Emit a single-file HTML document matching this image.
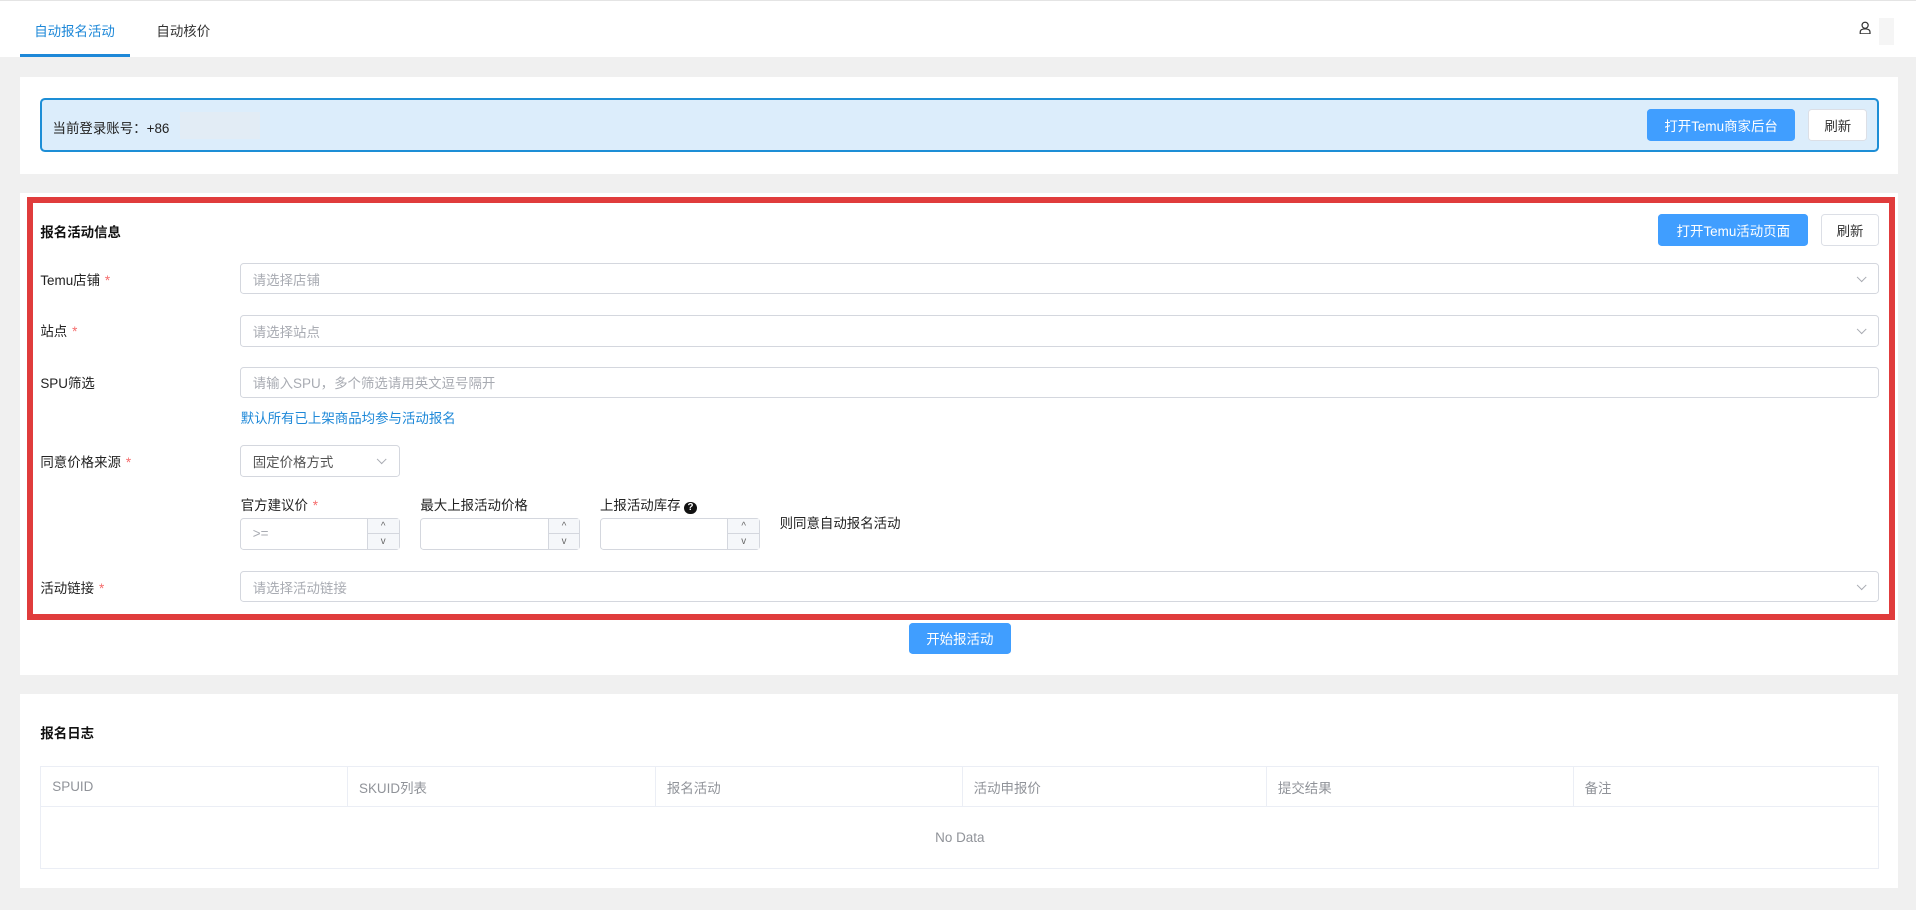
<!DOCTYPE html>
<html><head><meta charset="utf-8"><style>
html{zoom:1.22194}
*{box-sizing:border-box;margin:0;padding:0}
body{width:1568px;height:745px;overflow:hidden;background:#f0f0f0;font-family:"Liberation Sans","Noto Sans CJK SC",sans-serif;font-size:11px;color:#222;position:relative}
.a{position:absolute}
.hdr{left:0;top:0;width:1568px;height:47px;background:#fff;border-top:1px solid #e4e4e4}
.card{background:#fff;left:16px;width:1537px}
.btnp{background:#409eff;color:#fff;border-radius:3px;display:flex;align-items:center;justify-content:center;font-size:11px}
.btn{background:#fff;border:1px solid #dcdfe6;color:#333;border-radius:3px;display:flex;align-items:center;justify-content:center;font-size:11px}
.inp{border:1px solid #d4d7de;border-radius:3px;background:#fff;color:#a8abb2;padding-left:10px;display:flex;align-items:center}
.lbl{left:33px;transform:translateY(-50%)}
.req{color:#f56c6c;margin-left:4px}
.arr{position:absolute;right:11px;top:50%;width:6px;height:6px;border-right:1px solid #a8abb2;border-bottom:1px solid #a8abb2;transform:translateY(-70%) rotate(45deg)}
.spin{position:absolute;right:0;top:0;width:26px;height:100%;border-left:1px solid #d4d7de;background:#f5f7fa}
.spin div{height:50%;display:flex;align-items:center;justify-content:center;color:#666;font-size:8px}
.spin div:first-child{border-bottom:1px solid #d4d7de}
th{font-weight:normal;color:#909399;text-align:left;padding-left:9px;border-right:1px solid #ebeef5;border-bottom:1px solid #ebeef5;height:33px}
</style></head><body>
<div class="a hdr"></div>
<div class="a" style="left:28px;top:16px;color:#1e88d8">自动报名活动</div>
<div class="a" style="left:16px;top:44px;width:90px;height:3px;background:#1e88d8"></div>
<div class="a" style="left:128px;top:16px;color:#333">自动核价</div>
<svg class="a" style="left:1521px;top:17px" width="10" height="11" viewBox="0 0 10 11"><circle cx="5" cy="3.5" r="2.5" fill="none" stroke="#333" stroke-width="1"/><path d="M1 10.5v-1.5q0-2.5 4-2.5t4 2.5v1.5z" fill="none" stroke="#333"/></svg>
<div class="a" style="left:1538px;top:15px;width:12px;height:22px;background:#f5f5f5"></div>

<div class="a card" style="top:63px;height:79px"></div>
<div class="a" style="left:33px;top:80px;width:1505px;height:44px;background:#dcedfb;border:2px solid #1d8ed6;border-radius:4px"></div>
<div class="a" style="left:43px;top:96px">当前登录账号：+86</div>
<div class="a" style="left:147px;top:92px;width:66px;height:22px;background:#e2ecf5"></div>
<div class="a btnp" style="left:1348px;top:89px;width:121px;height:26px">打开Temu商家后台</div>
<div class="a btn" style="left:1480px;top:89px;width:48px;height:26px">刷新</div>

<div class="a card" style="top:158px;height:394px"></div>
<div class="a" style="left:22px;top:161px;width:1529px;height:346px;border:5px solid #e03c3c"></div>
<div class="a" style="left:33px;top:181px;font-weight:bold;color:#111">报名活动信息</div>
<div class="a btnp" style="left:1357px;top:175px;width:123px;height:26px">打开Temu活动页面</div>
<div class="a btn" style="left:1490px;top:175px;width:48px;height:26px">刷新</div>

<div class="a lbl" style="top:228px">Temu店铺<span class="req">*</span></div>
<div class="a inp" style="left:196px;top:215px;width:1342px;height:26px">请选择店铺<i class="arr"></i></div>
<div class="a lbl" style="top:270px">站点<span class="req">*</span></div>
<div class="a inp" style="left:196px;top:258px;width:1342px;height:26px">请选择站点<i class="arr"></i></div>
<div class="a lbl" style="top:313px">SPU筛选</div>
<div class="a inp" style="left:196px;top:300px;width:1342px;height:26px">请输入SPU，多个筛选请用英文逗号隔开</div>
<div class="a" style="left:197px;top:333px;color:#1e88d8">默认所有已上架商品均参与活动报名</div>
<div class="a lbl" style="top:377px">同意价格来源<span class="req">*</span></div>
<div class="a inp" style="left:196px;top:364px;width:131px;height:26px;color:#555">固定价格方式<i class="arr"></i></div>
<div class="a" style="left:197px;top:404px">官方建议价<span class="req">*</span></div>
<div class="a" style="left:344px;top:404px">最大上报活动价格</div>
<div class="a" style="left:491px;top:404px">上报活动库存 <span style="display:inline-block;width:10px;height:10px;border-radius:50%;background:#111;color:#fff;font-size:8px;line-height:10px;text-align:center;font-weight:bold">?</span></div>
<div class="a inp" style="left:196px;top:424px;width:131px;height:26px">&gt;=<div class="spin"><div>^</div><div>v</div></div></div>
<div class="a inp" style="left:344px;top:424px;width:131px;height:26px"><div class="spin"><div>^</div><div>v</div></div></div>
<div class="a inp" style="left:491px;top:424px;width:131px;height:26px"><div class="spin"><div>^</div><div>v</div></div></div>
<div class="a" style="left:638px;top:419px">则同意自动报名活动</div>
<div class="a lbl" style="top:480px">活动链接<span class="req">*</span></div>
<div class="a inp" style="left:196px;top:467px;width:1342px;height:26px">请选择活动链接<i class="arr"></i></div>
<div class="a btnp" style="left:744px;top:510px;width:83px;height:25px">开始报活动</div>

<div class="a card" style="top:568px;height:159px"></div>
<div class="a" style="left:33px;top:591px;font-weight:bold;color:#111">报名日志</div>
<table class="a" style="left:33px;top:627px;width:1505px;border-collapse:collapse;border:1px solid #ebeef5;font-size:11px">
<tr><th style="width:251px">SPUID</th><th style="width:252px">SKUID列表</th><th style="width:251px">报名活动</th><th style="width:249px">活动申报价</th><th style="width:251px">提交结果</th><th>备注</th></tr>
<tr><td colspan="6" style="height:50px;text-align:center;color:#909399">No Data</td></tr>
</table>
</body></html>
